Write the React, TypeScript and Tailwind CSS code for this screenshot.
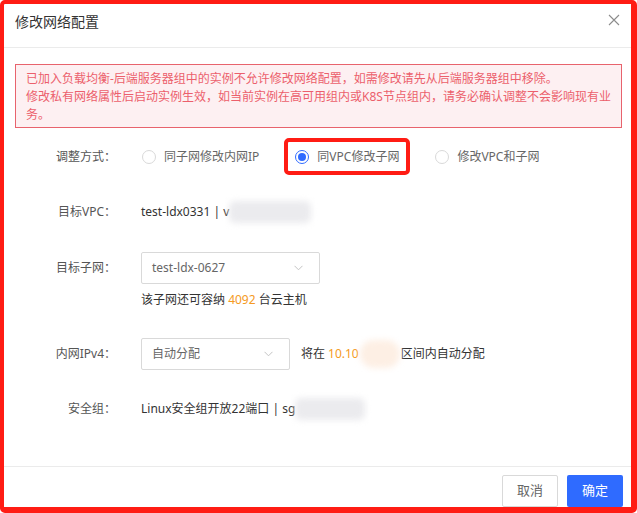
import React from "react";

// ─── Small pieces ─────────────────────────────────────────────────────────────

function Radio({ label, checked = false }: { label: string; checked?: boolean }) {
  return (
    <span className="flex items-center">
      <span
        className={
          checked
            ? "flex h-[14px] w-[14px] items-center justify-center rounded-full border border-[#2f6bff] bg-white"
            : "h-[14px] w-[14px] rounded-full border border-[#d9d9d9] bg-white"
        }
      >
        {checked && <span className="h-[8px] w-[8px] rounded-full bg-[#2f6bff]" />}
      </span>
      <span className="ml-[8px] text-[12px] leading-[18px] text-[#666]">{label}</span>
    </span>
  );
}

function Select({ value, width }: { value: string; width: string }) {
  return (
    <div
      className={`flex h-[32px] items-center justify-between rounded-[2px] border border-[#d9d9d9] bg-white pl-[10px] pr-[16px] ${width}`}
    >
      <span className="text-[12px] text-[#666]">{value}</span>
      <svg width="9" height="6" viewBox="0 0 9 6" fill="none">
        <polyline points="0.5,0.8 4.5,4.8 8.5,0.8" stroke="#c4c4c4" strokeWidth="1" />
      </svg>
    </div>
  );
}

function Blur({ w, h, color }: { w: string; h: string; color: string }) {
  return <span className={`inline-block align-middle rounded-[6px] blur-[3px] ${w} ${h} ${color}`} />;
}

function Row({ label, children, className = "" }: { label: string; children: React.ReactNode; className?: string }) {
  return (
    <div className={`flex items-center pl-[52px] ${className}`}>
      <div className="flex w-[60px] shrink-0 justify-end whitespace-nowrap text-[12px] text-[#555]">{label}</div>
      <div className="ml-[25px] flex items-center text-[12px] text-[#333]">{children}</div>
    </div>
  );
}

// ─── Page ─────────────────────────────────────────────────────────────────────

export default function App() {
  return (
    <div className="h-[513px] w-[637px] overflow-hidden rounded-[5px] border-t-[4px] border-l-[4px] border-r-[6px] border-b-[6px] border-[#ff1c14] bg-white font-['Noto_Sans','Noto_Sans_CJK_SC',sans-serif]">
      <div className="flex h-full flex-col">
        {/* header */}
        <div className="flex h-[44px] shrink-0 items-start justify-between border-b border-[#ebebeb] pl-[11px] pr-[11px] pt-[8px]">
          <span className="text-[14px] leading-[20px] text-[#333]">修改网络配置</span>
          <svg width="12" height="12" viewBox="0 0 12 12" className="mt-[2px]">
            <path d="M1 1 L11 11 M11 1 L1 11" stroke="#8c8c8c" strokeWidth="1.1" />
          </svg>
        </div>

        {/* body */}
        <div className="flex-1">
          <div className="ml-[11px] mr-[9px] mt-[16px] h-[64px] border border-[#e8636d] bg-[#fdf0f2] pl-[10px] pt-[5px] text-[12px] leading-[18px] text-[#ec5f6c]">
            <div className="whitespace-nowrap">
              已加入负载均衡-后端服务器组中的实例不允许修改网络配置，如需修改请先从后端服务器组中移除。
            </div>
            <div className="whitespace-nowrap">
              修改私有网络属性后启动实例生效，如当前实例在高可用组内或K8S节点组内，请务必确认调整不会影响现有业
            </div>
            <div className="whitespace-nowrap">务。</div>
          </div>

          <Row label="调整方式：" className="mt-[13px] h-[32px]">
            <div className="flex items-center gap-[36px] pl-[1px]">
              <Radio label="同子网修改内网IP" />
              <span className="relative">
                <Radio label="同VPC修改子网" checked />
                <span className="pointer-events-none absolute -bottom-[9px] -left-[11px] -right-[11px] -top-[10px] rounded-[5px] border-[4px] border-[#ff1c14]" />
              </span>
              <Radio label="修改VPC和子网" />
            </div>
          </Row>

          <Row label="目标VPC：" className="mt-[23px] h-[32px]">
            <span>test-ldx0331 | v</span>
            <Blur w="w-[82px]" h="h-[22px]" color="bg-[#ebebee]" />
          </Row>

          <Row label="目标子网：" className="mt-[24px] h-[32px]">
            <Select value="test-ldx-0627" width="w-[179px]" />
          </Row>
          <div className="mt-[7px] pl-[137px] text-[12px] leading-[18px] text-[#333]">
            该子网还可容纳 <span className="text-[#f59a23]">4092</span> 台云主机
          </div>

          <Row label="内网IPv4：" className="mt-[29px] h-[32px]">
            <Select value="自动分配" width="w-[149px]" />
            <span className="ml-[11px]">将在 </span>
            <span className="ml-[3px] text-[#f59a23]">10.10</span>
            <span className="mx-[1px] inline-block h-[28px] w-[40px] rounded-full bg-[#fdefe4] blur-[3px]" />
            <span>区间内自动分配</span>
          </Row>

          <Row label="安全组：" className="mt-[23px] h-[32px]">
            <span>Linux安全组开放22端口 | sg</span>
            <Blur w="w-[70px]" h="h-[22px]" color="bg-[#ebebee]" />
          </Row>
        </div>

        {/* footer */}
        <div className="flex h-[41px] shrink-0 justify-end gap-[9px] border-t border-[#ebebeb] pr-[8px] pt-[8px]">
          <button className="h-[32px] w-[56px] rounded-[2px] border border-[#d9d9d9] bg-white text-[13px] text-[#666]">
            取消
          </button>
          <button className="h-[32px] w-[56px] rounded-[2px] bg-[#2f6bff] text-[13px] text-white">
            确定
          </button>
        </div>
      </div>
    </div>
  );
}
